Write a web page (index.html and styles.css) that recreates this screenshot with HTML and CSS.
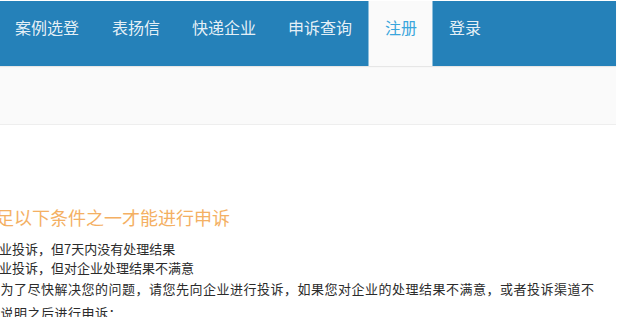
FILE: index.html
```html
<!DOCTYPE html>
<html lang="zh-CN">

<head>
    <meta charset="UTF-8">
    <meta name="viewport" content="width=device-width, initial-scale=1.0">
    <title>申诉</title>
    <link rel="stylesheet" href="styles.css">
</head>

<body>
    <div class="page">
        <nav class="topnav">
            <ul>
                <li><a href="#">案例选登</a></li>
                <li><a href="#">表扬信</a></li>
                <li><a href="#">快递企业</a></li>
                <li><a href="#">申诉查询</a></li>
                <li class="active"><a href="#">注册</a></li>
                <li><a href="#">登录</a></li>
            </ul>
        </nav>

        <div class="banner"></div>

        <main class="content">
            <h2 class="cond-title">满足以下条件之一才能进行申诉</h2>
            <ul class="cond-list">
                <li>已向企业投诉，但7天内没有处理结果</li>
                <li>已向企业投诉，但对企业处理结果不满意</li>
            </ul>
            <p class="note">提示：为了尽快解决您的问题，请您先向企业进行投诉，如果您对企业的处理结果不满意，或者投诉渠道不畅，请说明之后进行申诉：</p>
        </main>
    </div>
</body>

</html>
```

FILE: styles.css
```css
body {
    margin: 0;
    font-family: "Noto Sans CJK SC", "Noto Sans", sans-serif;
    background-color: #fff;
    color: #2b2b2b;
    overflow: hidden;
}

.page {
    width: 616px;
    padding-top: 1px;
}

.topnav {
    background-color: #2581b9;
    height: 65px;
    box-shadow: 0 1px 1px rgba(0, 0, 0, 0.08);
    position: relative;
}

.topnav ul {
    list-style: none;
    margin: 0;
    padding: 0;
    display: flex;
    height: 100%;
}

.topnav li a {
    display: block;
    height: 100%;
    box-sizing: border-box;
    padding: 16px 16px 0;
    font-size: 16px;
    line-height: 20px;
    color: rgba(255, 255, 255, 0.9);
    text-decoration: none;
}

.topnav li:first-child a {
    padding-left: 15px;
    padding-right: 17px;
}

.topnav li.active a {
    background-color: #fafafa;
    color: #3aa6dc;
    border-left: 1px solid #8dbfdc;
    border-right: 1px solid #8dbfdc;
    padding-left: 16px;
    padding-right: 15px;
}

.banner {
    height: 58px;
    background-color: #fafafa;
    border-bottom: 1px solid #eeeeee;
}

.content {
    margin-left: -40px;
    width: 640px;
    padding-top: 80px;
}

.cond-title {
    margin: 0 0 0 18px;
    font-size: 18px;
    font-weight: normal;
    line-height: 24px;
    color: #f4b063;
}

.cond-list {
    list-style: none;
    margin: 10px 0 0;
    padding: 0;
    font-size: 13px;
    line-height: 19px;
}

.note {
    margin: 0;
    font-size: 13px;
    letter-spacing: 0.5px;
    line-height: 24px;
}
```
